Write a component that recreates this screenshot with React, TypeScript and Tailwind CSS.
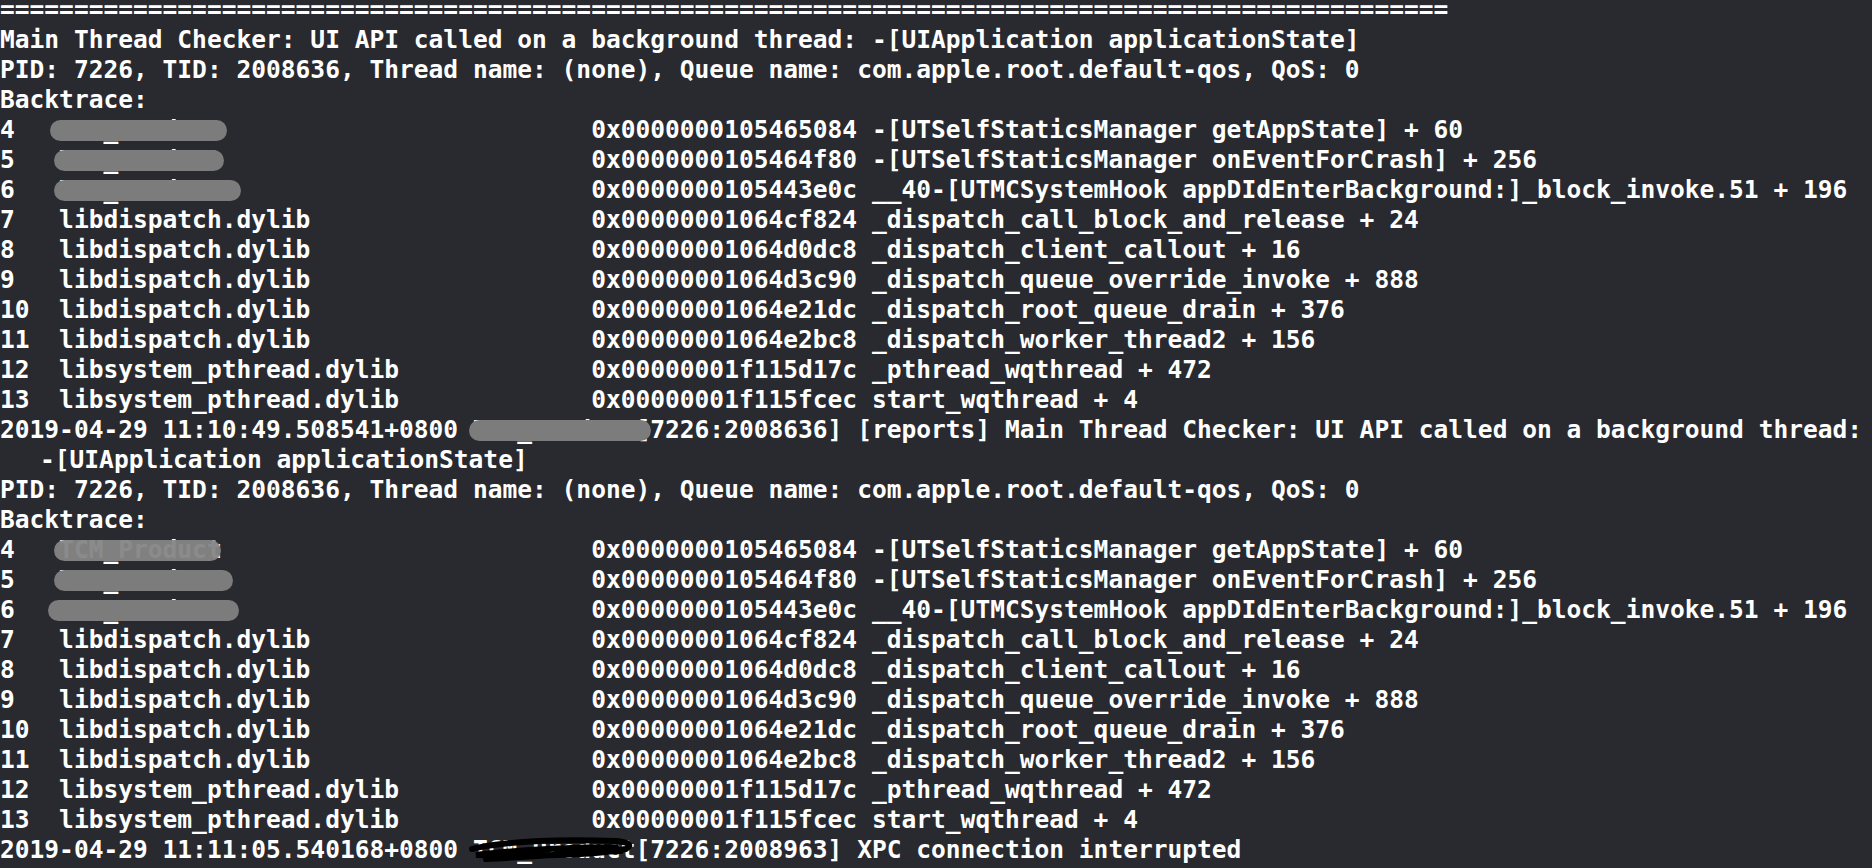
const rule = "=".repeat(98);

const pad = (s: string, n: number) => s + " ".repeat(Math.max(0, n - s.length));

type Frame = [string, string, string, string];

const frames: Frame[] = [
  ["4", "TCM_Product", "0x0000000105465084", "-[UTSelfStaticsManager getAppState] + 60"],
  ["5", "TCM_Product", "0x0000000105464f80", "-[UTSelfStaticsManager onEventForCrash] + 256"],
  ["6", "TCM_Product", "0x0000000105443e0c", "__40-[UTMCSystemHook appDIdEnterBackground:]_block_invoke.51 + 196"],
  ["7", "libdispatch.dylib", "0x00000001064cf824", "_dispatch_call_block_and_release + 24"],
  ["8", "libdispatch.dylib", "0x00000001064d0dc8", "_dispatch_client_callout + 16"],
  ["9", "libdispatch.dylib", "0x00000001064d3c90", "_dispatch_queue_override_invoke + 888"],
  ["10", "libdispatch.dylib", "0x00000001064e21dc", "_dispatch_root_queue_drain + 376"],
  ["11", "libdispatch.dylib", "0x00000001064e2bc8", "_dispatch_worker_thread2 + 156"],
  ["12", "libsystem_pthread.dylib", "0x00000001f115d17c", "_pthread_wqthread + 472"],
  ["13", "libsystem_pthread.dylib", "0x00000001f115fcec", "start_wqthread + 4"],
];

const frameLine = (f: Frame) => pad(f[0], 4) + pad(f[1], 36) + f[2] + " " + f[3];

// gray smudges over the app name: [left, width, colour]
const blobs1: [number, number, string][] = [
  [50, 177, "bg-[#7c7c7c]"],
  [54, 170, "bg-[#7c7c7c]"],
  [54, 187, "bg-[#7c7c7c]"],
];
const blobs2: [number, number, string][] = [
  [54, 167, "bg-[#858585]/95"],
  [54, 179, "bg-[#7c7c7c]"],
  [48, 191, "bg-[#7c7c7c]"],
];

function Line({ children, className = "" }: { children: React.ReactNode; className?: string }) {
  return <div className={"relative h-[30px] whitespace-pre " + className}>{children}</div>;
}

function Blob({ left, width, color }: { left: number; width: number; color: string }) {
  return (
    <span
      className={"absolute top-[5px] h-[21px] rounded-full blur-[0.6px] " + color}
      style={{ left, width }}
    />
  );
}

function Backtrace({ blobs }: { blobs: [number, number, string][] }) {
  return (
    <>
      <Line>Backtrace:</Line>
      {frames.map((f, i) => (
        <Line key={f[2]}>
          {frameLine(f)}
          {blobs[i] && <Blob left={blobs[i][0]} width={blobs[i][1]} color={blobs[i][2]} />}
        </Line>
      ))}
    </>
  );
}

const pidLine = "PID: 7226, TID: 2008636, Thread name: (none), Queue name: com.apple.root.default-qos, QoS: 0";

export default function App() {
  return (
    <div className="w-[1872px] h-[868px] overflow-hidden bg-[#292a30]">
      <div className="-mt-[5px] text-white font-bold text-[24.55px] leading-[30px] [font-family:'DejaVu_Sans_Mono',monospace]">
        <Line>{rule}</Line>
        <Line>Main Thread Checker: UI API called on a background thread: -[UIApplication applicationState]</Line>
        <Line>{pidLine}</Line>
        <Backtrace blobs={blobs1} />
        <Line>
          2019-04-29 11:10:49.508541+0800 TCM_Product[7226:2008636] [reports] Main Thread Checker: UI API called on a background thread:
          <Blob left={469} width={182} color="bg-[#7c7c7c]" />
        </Line>
        <Line className="pl-[40px]">-[UIApplication applicationState]</Line>
        <Line>{pidLine}</Line>
        <Backtrace blobs={blobs2} />
        <Line>
          2019-04-29 11:11:05.540168+0800 TCM_Product[7226:2008963] XPC connection interrupted
          <svg className="absolute left-[466px] top-0" width="175" height="30" viewBox="0 0 175 30">
            <path
              d="M6 14 C40 6, 90 4, 150 6 C160 7, 168 9, 160 14 C130 20, 60 22, 10 20 C40 16, 100 12, 150 12 M20 24 C60 22, 110 18, 155 16"
              fill="none"
              stroke="#000"
              strokeWidth="6"
              strokeLinecap="round"
            />
          </svg>
        </Line>
      </div>
    </div>
  );
}
